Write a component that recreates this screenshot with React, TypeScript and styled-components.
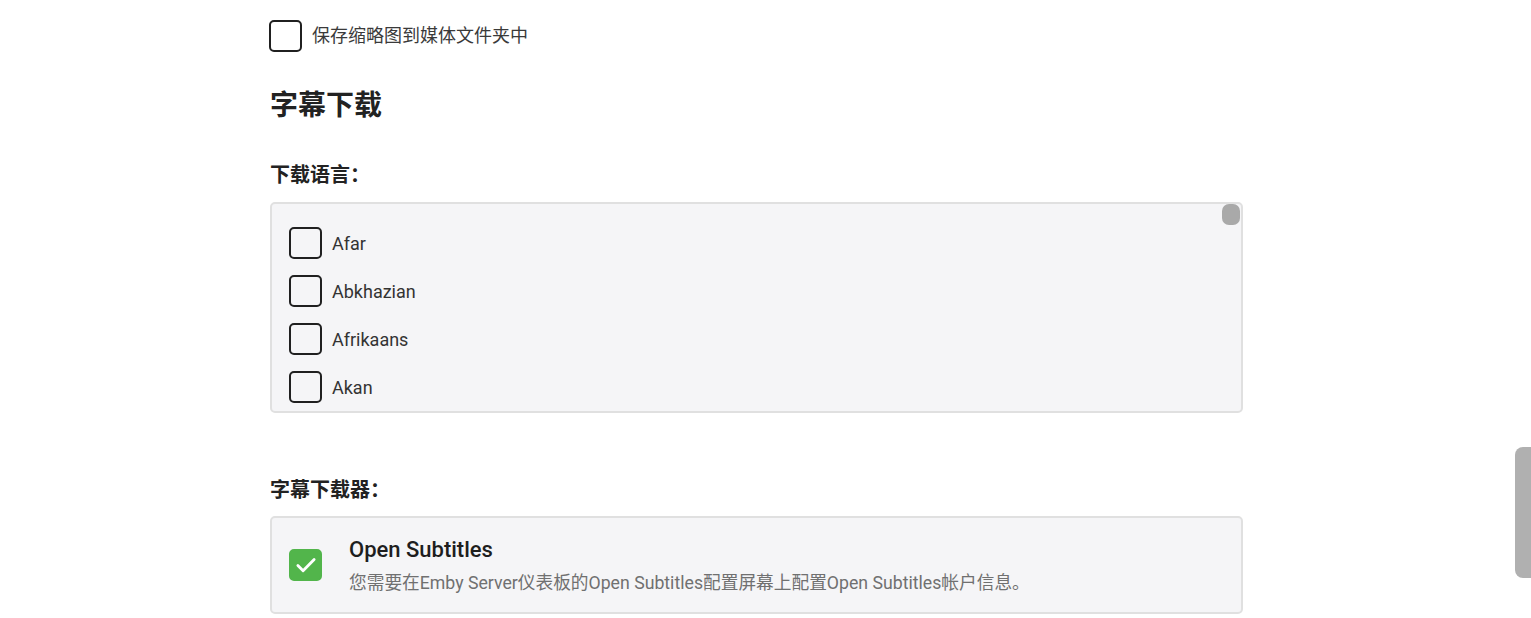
import styled, { createGlobalStyle } from 'styled-components'

const GlobalStyle = createGlobalStyle`
  html, body {
    margin: 0;
    padding: 0;
    background: #ffffff;
    overflow: hidden;
  }
  body {
    font-family: Roboto, "Noto Sans CJK SC", sans-serif;
    color: #202020;
  }
`

const Page = styled.div`
  width: 974px;
  margin-left: 269px;
  padding-top: 20px;
  display: flex;
  flex-direction: column;
`

const CheckRow = styled.label`
  display: flex;
  align-items: center;
  gap: 10px;
  height: 32px;
`

const Box = styled.span<{ $checked?: boolean }>`
  box-sizing: border-box;
  width: 33px;
  height: 32px;
  flex: none;
  border-radius: 5px;
  border: 2px solid ${({ $checked }) => ($checked ? '#52b54b' : '#202020')};
  background: ${({ $checked }) => ($checked ? '#52b54b' : 'transparent')};
  display: flex;
  align-items: center;
  justify-content: center;
`

const CheckText = styled.span`
  font-size: 18px;
  color: #3a3a3a;
  line-height: 1;
`

const SectionTitle = styled.h2`
  margin: 38px 0 0 1px;
  font-size: 28px;
  font-weight: 700;
  line-height: 32px;
  color: #222;
`

const FieldLabel = styled.h3<{ $top: number }>`
  margin: ${({ $top }) => $top}px 0 0 1px;
  font-size: 20px;
  font-weight: 700;
  line-height: 26px;
  color: #222;
`

const ListBox = styled.div`
  position: relative;
  box-sizing: border-box;
  margin-top: 14px;
  margin-left: 1px;
  height: 211px;
  background: #f5f5f7;
  border: 2px solid #e0e0e0;
  border-radius: 5px;
  padding: 23px 0 0 17px;
  overflow: hidden;
  display: flex;
  flex-direction: column;
  gap: 16px;
`

const ListThumb = styled.div`
  position: absolute;
  top: 0;
  right: 1px;
  width: 18px;
  height: 21px;
  border-radius: 7px;
  background: #a9a9a9;
`

const ItemText = styled.span`
  font-size: 18px;
  color: #333;
`

const Card = styled.div`
  box-sizing: border-box;
  margin-top: 13px;
  margin-left: 1px;
  height: 98px;
  background: #f5f5f7;
  border: 2px solid #e0e0e0;
  border-radius: 5px;
  padding: 0 17px;
  display: flex;
  align-items: center;
  gap: 27px;
`

const CardBody = styled.div`
  display: flex;
  flex-direction: column;
  gap: 6px;
  margin-top: 0px;
`

const CardTitle = styled.div`
  font-size: 22px;
  font-weight: 500;
  color: #1e1e1e;
`

const CardDesc = styled.div`
  font-size: 17.7px;
  color: #707070;
`

const PageThumb = styled.div`
  position: fixed;
  right: 0;
  top: 447px;
  width: 16px;
  height: 131px;
  border-radius: 8px 0 0 8px;
  background: #b0b0b0;
`

const Check = () => (
  <svg width="26" height="26" viewBox="0 0 24 24" fill="none" stroke="#fff" strokeWidth="2.6" strokeLinecap="round" strokeLinejoin="round">
    <path d="M4.5 12.5l4.8 4.8L19.5 7" />
  </svg>
)

const languages = ['Afar', 'Abkhazian', 'Afrikaans', 'Akan']

export default function App() {
  return (
    <>
      <GlobalStyle />
      <Page>
        <CheckRow>
          <Box />
          <CheckText>保存缩略图到媒体文件夹中</CheckText>
        </CheckRow>
        <SectionTitle>字幕下载</SectionTitle>
        <FieldLabel $top={40}>下载语言：</FieldLabel>
        <ListBox>
          <ListThumb />
          {languages.map((l) => (
            <CheckRow key={l}>
              <Box />
              <ItemText>{l}</ItemText>
            </CheckRow>
          ))}
        </ListBox>
        <FieldLabel $top={64}>字幕下载器：</FieldLabel>
        <Card>
          <Box $checked>
            <Check />
          </Box>
          <CardBody>
            <CardTitle>Open Subtitles</CardTitle>
            <CardDesc>您需要在Emby Server仪表板的Open Subtitles配置屏幕上配置Open Subtitles帐户信息。</CardDesc>
          </CardBody>
        </Card>
      </Page>
      <PageThumb />
    </>
  )
}
